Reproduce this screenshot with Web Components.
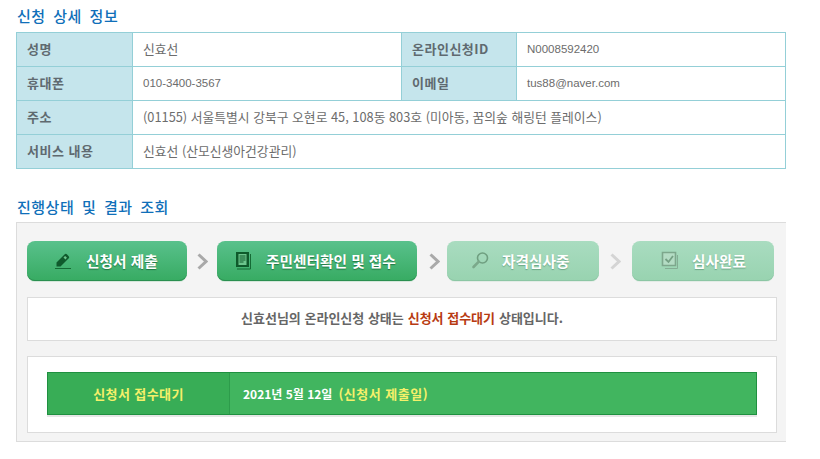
<!DOCTYPE html>
<html lang="ko">
<head>
<meta charset="utf-8">
<title>신청 상세 정보</title>
<style>
  html, body { margin: 0; background: #fff; }
  body {
    font-family: "Noto Sans CJK KR", "Noto Sans", sans-serif;
    font-size: 12px;
    color: #666;
  }
</style>
</head>
<body>
<app-page>
  <section-title>신청 상세 정보</section-title>
  <info-table>
    <info-row label="성명" value="신효선" label2="온라인신청ID" value2="N0008592420"></info-row>
    <info-row label="휴대폰" value="010-3400-3567" label2="이메일" value2="tus88@naver.com"></info-row>
    <info-row label="주소" value="(01155) 서울특별시 강북구 오현로 45, 108동 803호 (미아동, 꿈의숲 해링턴 플레이스)"></info-row>
    <info-row label="서비스 내용" value="신효선 (산모신생아건강관리)"></info-row>
  </info-table>
  <section-title class="second">진행상태 및 결과 조회</section-title>
  <status-panel>
    <step-bar>
      <step-button icon="pencil" width="160" pad="27">신청서 제출</step-button>
      <step-arrow width="30"></step-arrow>
      <step-button icon="doc" width="200" pad="17">주민센터확인 및 접수</step-button>
      <step-arrow width="30" shift="2"></step-arrow>
      <step-button icon="search" width="152" pad="23" off>자격심사중</step-button>
      <step-arrow width="33" off></step-arrow>
      <step-button icon="check" width="142" pad="28" off>심사완료</step-button>
    </step-bar>
    <status-message>신효선님의 온라인신청 상태는 <b>신청서 접수대기</b> 상태입니다.</status-message>
    <result-box label="신청서 접수대기" date="2021년 5월 12일" note="(신청서 제출일)"></result-box>
  </status-panel>
</app-page>

<script>
  class AppPage extends HTMLElement {
    constructor() {
      super();
      this.attachShadow({ mode: "open" });
      this.shadowRoot.innerHTML = `
        <style>
          :host { display: block; width: 770px; padding: 8px 0 0 16px; }
        </style>
        <slot></slot>
      `;
    }
  }

  class SectionTitle extends HTMLElement {
    constructor() {
      super();
      this.attachShadow({ mode: "open" });
      this.shadowRoot.innerHTML = `
        <style>
          :host {
            display: block;
            height: 24px;
            padding-left: 1px;
            color: #0f6fb9;
            font-size: 15px;
            font-weight: 500;
            line-height: 16px;
            letter-spacing: 0.5px;
            word-spacing: 3px;
          }
          :host(.second) { margin-top: 29px; line-height: 18px; }
        </style>
        <slot></slot>
      `;
    }
  }

  class InfoTable extends HTMLElement {
    constructor() {
      super();
      this.attachShadow({ mode: "open" });
      this.shadowRoot.innerHTML = `
        <style>
          :host { display: block; width: 770px; box-sizing: border-box; border: solid #94cfd7; border-width: 1px 1px 0 1px; }
        </style>
        <slot></slot>
      `;
    }
  }

  class InfoRow extends HTMLElement {
    constructor() {
      super();
      this.attachShadow({ mode: "open" });
      const wide = !this.hasAttribute("label2");
      this.shadowRoot.innerHTML = `
        <style>
          :host {
            display: grid;
            grid-template-columns: ${wide ? "116px 1fr" : "116px 269px 115px 1fr"};
            height: 34px;
            box-sizing: border-box;
            border-bottom: 1px solid #94cfd7;
            font-size: 12.8px;
            color: #6c6c6c;
          }
          .th, .td { display: flex; align-items: center; white-space: nowrap; padding-bottom: 2px; }
          .th {
            padding-left: 10px;
            background: #c5e5ec;
            border-right: 1px solid #94cfd7;
            font-size: 13px;
            font-weight: 700;
            color: #5f6a70;
            letter-spacing: 0.5px;
          }
          .td { padding-left: 10px; }
          .td.mid { border-right: 1px solid #94cfd7; }
          .td.latin { font-family: "Liberation Sans", sans-serif; font-size: 11.5px; padding-bottom: 1px; }
        </style>
        <div class="th"></div><div class="td${wide ? "" : " mid"}"></div>
        ${wide ? "" : '<div class="th"></div><div class="td"></div>'}
      `;
      const cells = this.shadowRoot.querySelectorAll(".th, .td");
      const fill = (cell, text) => {
        cell.textContent = text;
        if (cell.classList.contains("td") && !/[가-힣]/.test(text)) cell.classList.add("latin");
      };
      fill(cells[0], this.getAttribute("label"));
      fill(cells[1], this.getAttribute("value"));
      if (!wide) {
        fill(cells[2], this.getAttribute("label2"));
        fill(cells[3], this.getAttribute("value2"));
      }
    }
  }

  class StatusPanel extends HTMLElement {
    constructor() {
      super();
      this.attachShadow({ mode: "open" });
      this.shadowRoot.innerHTML = `
        <style>
          :host {
            display: block;
            width: 770px;
            height: 220px;
            box-sizing: border-box;
            padding: 18px 9px 0 10px;
            background: #f4f4f4;
            border: solid #dcdcdc;
            border-width: 1px 0 1px 1px;
          }
        </style>
        <slot></slot>
      `;
    }
  }

  class StepBar extends HTMLElement {
    constructor() {
      super();
      this.attachShadow({ mode: "open" });
      this.shadowRoot.innerHTML = `
        <style>
          :host { display: flex; align-items: center; height: 40px; }
        </style>
        <slot></slot>
      `;
    }
  }

  const ICONS = {
    pencil: `<svg width="20" height="20" viewBox="0 0 20 20">
      <path d="M2.5 11.5 10.5 3.5a1.8 1.8 0 0 1 2.6 0l1.4 1.4a1.8 1.8 0 0 1 0 2.6l-8 8H2.5z" fill="#0f5a2c"/>
      <path d="M9.5 6.5l1.6-1.6 1.9 1.9-1.6 1.6z" fill="#6cc58d"/>
      <path d="M1 17.5H17" stroke="#156a35" stroke-width="1"/>
    </svg>`,
    doc: `<svg width="20" height="20" viewBox="0 0 20 20">
      <path d="M2 1h13v15H2z" fill="#0e5a2b"/>
      <path d="M4.5 3h8v11h-8z" fill="#6cc58d"/>
      <path d="M5.5 5h6M5.5 7h6M5.5 9h6M5.5 11h4" stroke="#0e5a2b" stroke-width="1"/>
      <path d="M16.5 3v15H3" fill="none" stroke="#156a35" stroke-width="1"/>
    </svg>`,
    search: `<svg width="20" height="20" viewBox="0 0 20 20">
      <circle cx="12.5" cy="7" r="5" fill="none" stroke="#6f9f80" stroke-width="1.6"/>
      <path d="M8.8 10.7 3.5 16" stroke="#7ba98b" stroke-width="2.6" stroke-linecap="round"/>
    </svg>`,
    check: `<svg width="20" height="20" viewBox="0 0 20 20">
      <path d="M2.5 1.5h13v13h-13z" fill="#b4dcc4" stroke="#7da78c" stroke-width="1.6"/>
      <path d="M5.5 8l3 3 4.5-6" fill="none" stroke="#75a084" stroke-width="1.8"/>
      <path d="M17.5 4v13.5H5" fill="none" stroke="#84ad94" stroke-width="1"/>
    </svg>`
  };

  class StepButton extends HTMLElement {
    constructor() {
      super();
      this.attachShadow({ mode: "open" });
      this.shadowRoot.innerHTML = `
        <style>
          :host {
            display: flex;
            align-items: center;
            flex: none;
            box-sizing: border-box;
            height: 40px;
            border-radius: 8px;
            background: linear-gradient(#59c18c, #37ab62);
            box-shadow: inset 0 -1px 0 #2a8f50, 0 1px 0 #d4e6da;
            color: #fff;
            font-size: 14.7px;
            font-weight: 700;
            text-shadow: 0 1px 1px rgba(0, 70, 30, 0.55);
            white-space: nowrap;
            padding-bottom: 2px;
          }
          :host([off]) {
            background: linear-gradient(#a9dcc0, #98d3b0);
            box-shadow: inset 0 -1px 0 #8cc6a4, 0 1px 0 #e3ebe6;
            text-shadow: 0 1px 1px rgba(60, 120, 90, 0.5);
          }
          .icon { display: flex; width: 20px; height: 20px; margin: 2px 12px 0 0; }
        </style>
        <span class="icon"></span><slot></slot>
      `;
      this.style.width = this.getAttribute("width") + "px";
      this.style.paddingLeft = this.getAttribute("pad") + "px";
      this.shadowRoot.querySelector(".icon").innerHTML = ICONS[this.getAttribute("icon")];
    }
  }

  class StepArrow extends HTMLElement {
    constructor() {
      super();
      this.attachShadow({ mode: "open" });
      this.shadowRoot.innerHTML = `
        <style>
          :host { display: flex; flex: none; justify-content: center; align-items: center; height: 40px; box-sizing: border-box; }
          svg { display: block; margin-top: 1px; }
          path { stroke: #a9a9a9; }
          :host([off]) path { stroke: #d4d4d4; }
        </style>
        <svg width="11" height="17" viewBox="0 0 11 17">
          <path d="M1.5 1.5l7.5 7-7.5 7" fill="none" stroke-width="3"/>
        </svg>
      `;
      this.style.width = this.getAttribute("width") + "px";
      if (this.hasAttribute("shift")) this.style.paddingLeft = this.getAttribute("shift") * 2 + "px";
    }
  }

  class StatusMessage extends HTMLElement {
    constructor() {
      super();
      this.attachShadow({ mode: "open" });
      this.shadowRoot.innerHTML = `
        <style>
          :host {
            display: flex;
            justify-content: center;
            align-items: center;
            box-sizing: border-box;
            width: 750px;
            height: 44px;
            margin-top: 16px;
            padding-bottom: 3px;
            background: #fff;
            border: 1px solid #dcdcdc;
            color: #666;
            font-size: 13px;
            font-weight: 700;
          }
          ::slotted(b) { margin: 0 0.3em; color: #b83b12; font-weight: 700; }
        </style>
        <slot></slot>
      `;
    }
  }

  class ResultBox extends HTMLElement {
    constructor() {
      super();
      this.attachShadow({ mode: "open" });
      this.shadowRoot.innerHTML = `
        <style>
          :host {
            display: block;
            box-sizing: border-box;
            width: 750px;
            height: 77px;
            margin-top: 15px;
            padding: 15px 19px 0;
            background: #fff;
            border: 1px solid #dcdcdc;
          }
          .bar {
            display: flex;
            box-sizing: border-box;
            height: 43px;
            background: #41b55f;
            border: 1px solid #1f9040;
            box-shadow: 0 2px 0 #e6e6e6;
            font-size: 12px;
            font-weight: 700;
            color: #fff;
          }
          .label {
            display: flex;
            justify-content: center;
            align-items: center;
            box-sizing: border-box;
            width: 182px;
            background: #38ad56;
            border-right: 1px solid #2d9c4b;
            color: #f5f06a;
            font-size: 13px;
            letter-spacing: 0.4px;
          }
          .info { display: flex; align-items: center; gap: 6px; padding-left: 13px; }
          .note { color: #f5f06a; font-size: 13px; letter-spacing: 0.5px; }
        </style>
        <div class="bar">
          <div class="label"></div>
          <div class="info"><span class="date"></span><span class="note"></span></div>
        </div>
      `;
      this.shadowRoot.querySelector(".label").textContent = this.getAttribute("label");
      this.shadowRoot.querySelector(".date").textContent = this.getAttribute("date");
      this.shadowRoot.querySelector(".note").textContent = this.getAttribute("note");
    }
  }

  customElements.define("app-page", AppPage);
  customElements.define("section-title", SectionTitle);
  customElements.define("info-table", InfoTable);
  customElements.define("info-row", InfoRow);
  customElements.define("status-panel", StatusPanel);
  customElements.define("step-bar", StepBar);
  customElements.define("step-button", StepButton);
  customElements.define("step-arrow", StepArrow);
  customElements.define("status-message", StatusMessage);
  customElements.define("result-box", ResultBox);
</script>
</body>
</html>
